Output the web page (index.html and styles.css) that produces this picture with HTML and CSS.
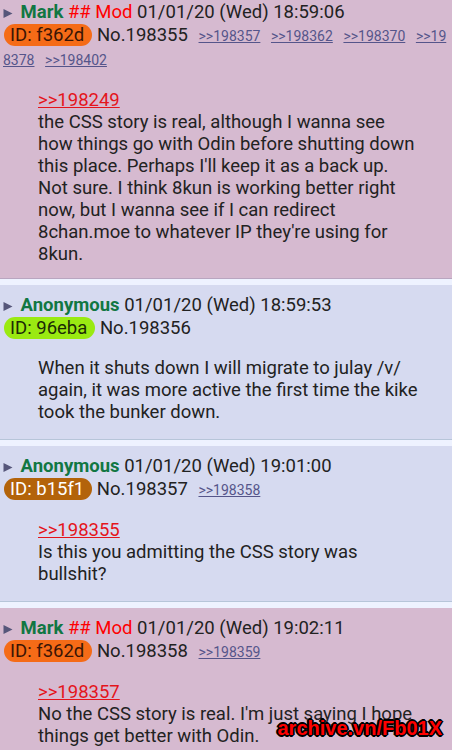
FILE: index.html
```html
<!DOCTYPE html>
<html lang="en">
  <head>
    <meta charset="UTF-8" />
    <meta name="viewport" content="width=device-width, initial-scale=1.0" />
    <title>/v/ - Thread</title>
    <link rel="stylesheet" href="styles.css">
  </head>
  <body>
    <div class="thread">
      <div class="post mod first">
        <div class="post-head">
          <svg class="arrow" width="10" height="11" viewBox="0 0 10 11"><polygon points="0.5,1 9.5,5.5 0.5,10" /></svg>
          <span class="name">Mark</span> <span class="cap">## Mod</span> <span class="date">01/01/20 (Wed) 18:59:06</span>
          <br>
          <span class="id id-orange">ID: f362d</span> <span class="no">No.198355</span>
          <a class="backlink" href="#">&gt;&gt;198357</a> <a class="backlink" href="#">&gt;&gt;198362</a> <a class="backlink" href="#">&gt;&gt;198370</a> <a class="backlink" href="#">&gt;&gt;198378</a> <a class="backlink" href="#">&gt;&gt;198402</a>
        </div>
        <div class="msg">
          <a class="quote" href="#">&gt;&gt;198249</a><br>
          the CSS story is real, although I wanna see how things go with Odin before shutting down this place. Perhaps I'll keep it as a back up. Not sure. I think 8kun is working better right now, but I wanna see if I can redirect 8chan.moe to whatever IP they're using for 8kun.
        </div>
      </div>

      <div class="post">
        <div class="post-head">
          <svg class="arrow" width="10" height="11" viewBox="0 0 10 11"><polygon points="0.5,1 9.5,5.5 0.5,10" /></svg>
          <span class="name">Anonymous</span> <span class="date">01/01/20 (Wed) 18:59:53</span>
          <br>
          <span class="id id-green">ID: 96eba</span> <span class="no">No.198356</span>
        </div>
        <div class="msg">
          When it shuts down I will migrate to julay /v/ again, it was more active the first time the kike took the bunker down.
        </div>
      </div>

      <div class="post">
        <div class="post-head">
          <svg class="arrow" width="10" height="11" viewBox="0 0 10 11"><polygon points="0.5,1 9.5,5.5 0.5,10" /></svg>
          <span class="name">Anonymous</span> <span class="date">01/01/20 (Wed) 19:01:00</span>
          <br>
          <span class="id id-brown">ID: b15f1</span> <span class="no">No.198357</span>
          <a class="backlink" href="#">&gt;&gt;198358</a>
        </div>
        <div class="msg">
          <a class="quote" href="#">&gt;&gt;198355</a><br>
          Is this you admitting the CSS story was bullshit?
        </div>
      </div>

      <div class="post mod">
        <div class="post-head">
          <svg class="arrow" width="10" height="11" viewBox="0 0 10 11"><polygon points="0.5,1 9.5,5.5 0.5,10" /></svg>
          <span class="name">Mark</span> <span class="cap">## Mod</span> <span class="date">01/01/20 (Wed) 19:02:11</span>
          <br>
          <span class="id id-orange">ID: f362d</span> <span class="no">No.198358</span>
          <a class="backlink" href="#">&gt;&gt;198359</a>
        </div>
        <div class="msg">
          <a class="quote" href="#">&gt;&gt;198357</a><br>
          No the CSS story is real. I'm just saying I hope things get better with Odin.
        </div>
      </div>
    </div>

    <div class="stamp">archive.vn/Fb01X</div>
  </body>
</html>
```

FILE: styles.css
```css
* {
  margin: 0;
  padding: 0;
  box-sizing: border-box;
}
html {
  overflow: hidden;
}
body {
  background-color: #eef2ff;
  font-family: "Roboto", "Liberation Sans", sans-serif;
  font-size: 18.5px;
  color: #222;
  position: relative;
}
.thread {
  display: flex;
  flex-direction: column;
  gap: 6px;
}
.post {
  background-color: #d6daf0;
  border-bottom: 1px solid #b7c5d9;
  padding: 9px 4px 16px 3px;
}
.post.mod {
  background-color: #d6bad0;
  border-bottom-color: #b9a6c0;
}
.post.first {
  margin-top: -8px;
  padding-bottom: 13px;
}
.post-head {
  line-height: 23px;
}
.arrow {
  fill: #56567a;
  margin-right: 3px;
  vertical-align: -1px;
}
.name {
  color: #117743;
  font-weight: bold;
}
.cap {
  color: #f00;
}
.id {
  display: inline-block;
  height: 22px;
  line-height: 22px;
  padding: 0 8px 0 6px;
  border-radius: 11px;
  margin-left: 1px;
  color: #3a1505;
}
.id-orange {
  background-color: #f56b17;
}
.id-green {
  background-color: #9aea12;
  color: #1c2a05;
}
.id-brown {
  background-color: #b3630a;
  color: #fff;
}
.backlink {
  font-size: 14px;
  color: #55558a;
  margin-left: 6px;
  word-break: break-all;
}
.msg {
  margin: 17px 29px 0 35px;
  line-height: 22px;
}
.quote {
  color: #e4151c;
}
.stamp {
  position: absolute;
  top: 716px;
  right: 10px;
  font-family: "Liberation Sans", sans-serif;
  font-weight: bold;
  font-size: 20px;
  line-height: 24px;
  color: #f00;
  text-shadow: -1px -1px 0 #000, 1px -1px 0 #000, -1px 1px 0 #000, 1px 1px 0 #000, 0 2px 0 #000, 2px 0 0 #000, 0 -2px 0 #000, -2px 0 0 #000;
}
```
